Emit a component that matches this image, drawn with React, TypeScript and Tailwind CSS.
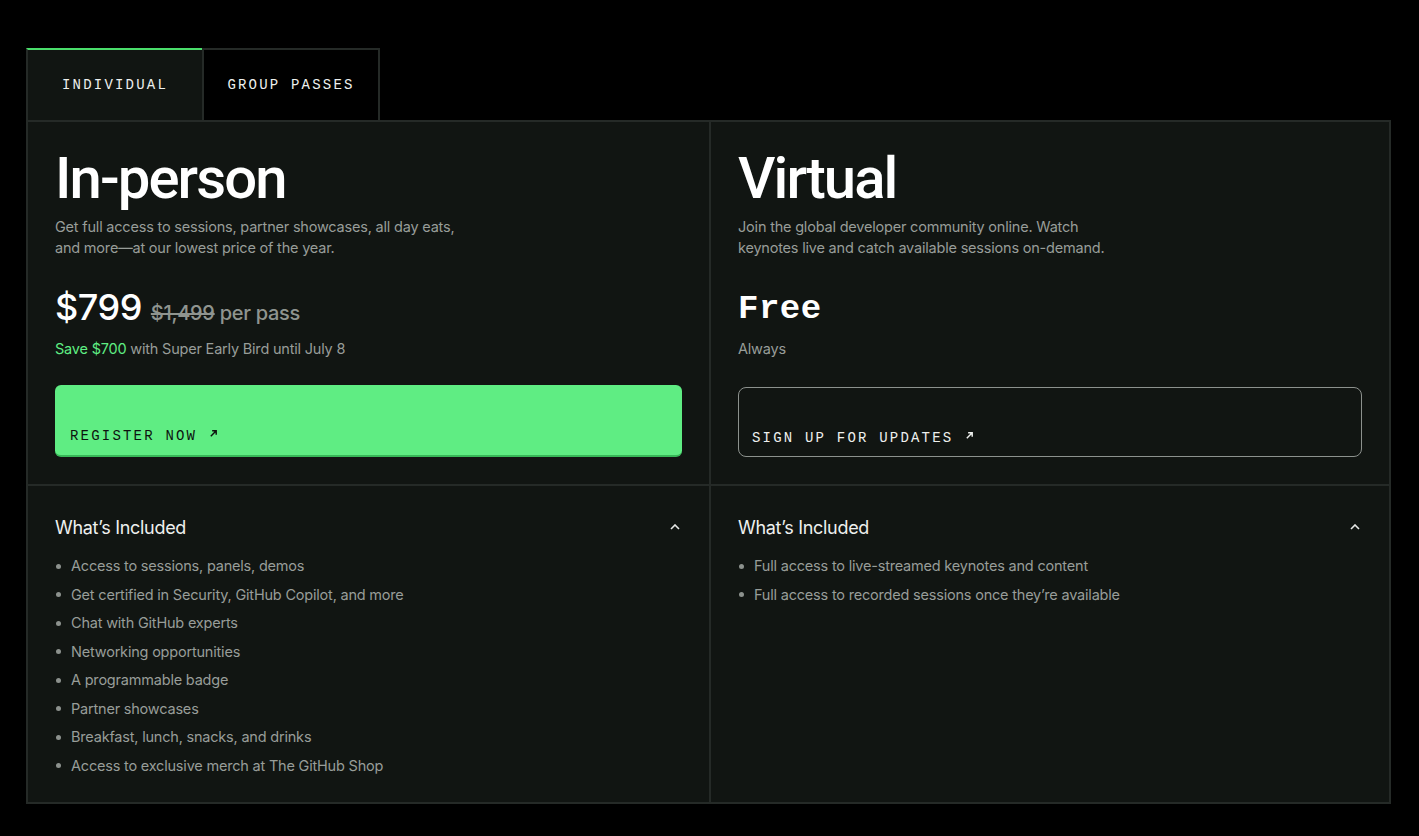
import React from "react";

const inPerson = [
  "Access to sessions, panels, demos",
  "Get certified in Security, GitHub Copilot, and more",
  "Chat with GitHub experts",
  "Networking opportunities",
  "A programmable badge",
  "Partner showcases",
  "Breakfast, lunch, snacks, and drinks",
  "Access to exclusive merch at The GitHub Shop",
];
const virtual = [
  "Full access to live-streamed keynotes and content",
  "Full access to recorded sessions once they’re available",
];

const sans = { fontFamily: "Inter, 'Noto Sans', sans-serif" };
const head = { fontFamily: "Roboto, Inter, sans-serif" };
const mono = { fontFamily: "'Liberation Mono', 'DejaVu Sans Mono', monospace" };

function Arrow() {
  return (
    <svg width="9" height="9" viewBox="0 0 10 10" className="inline-block ml-[12px] -mt-[2px]">
      <path d="M2 8 L8 2 M3.5 2 H8 V6.5" stroke="currentColor" strokeWidth="1.6" fill="none" />
    </svg>
  );
}

function Chevron() {
  return (
    <svg width="10" height="6" viewBox="0 0 10 6">
      <path d="M1 5 L5 1 L9 5" stroke="#e6e8e6" strokeWidth="1.6" fill="none" />
    </svg>
  );
}

function Included({ items }: { items: string[] }) {
  return (
    <div className="px-[27px] pt-[28px] pb-[22px]">
      <div className="flex items-center justify-between">
        <div className="text-[18px] text-[#eef0ee] tracking-[-0.3px]" style={sans}>What’s Included</div>
        <div className="mr-[2px]"><Chevron /></div>
      </div>
      <ul className="mt-[11px] flex flex-col">
        {items.map((t) => (
          <li key={t} className="flex items-center h-[28.5px] text-[14.5px] text-[#989d99] tracking-[-0.2px]" style={sans}>
            <span className="w-[5px] h-[5px] rounded-full bg-[#8c918d] ml-[1px] mr-[10px]" />
            {t}
          </li>
        ))}
      </ul>
    </div>
  );
}

export default function App() {
  return (
    <div className="min-h-[836px] bg-black pt-[48px] pl-[26px] pr-[28px]">
      <div className="flex">
        <div className="w-[176px] h-[72px] bg-[#111512] border-t-2 border-[#4ade6b] border-l-2 border-l-[#252a27] flex items-center justify-center">
          <span className="text-[14px] text-[#eef0ee] tracking-[2.2px]" style={mono}>INDIVIDUAL</span>
        </div>
        <div className="w-[178px] h-[72px] bg-black border-2 border-b-0 border-[#252a27] flex items-center justify-center">
          <span className="text-[14px] text-[#eef0ee] tracking-[2.2px]" style={mono}>GROUP PASSES</span>
        </div>
      </div>
      <div className="grid grid-cols-[683px_1fr] bg-[#111512] border-2 border-[#252a27]">
        <div className="border-r-2 border-[#252a27]">
          <div className="px-[27px] pt-[26px] pb-[27px] border-b-2 border-[#252a27]">
            <h1 className="text-[58px] leading-[60px] font-medium text-white tracking-[-1.9px]" style={head}>In-person</h1>
            <p className="mt-[8px] text-[14.5px] leading-[21px] text-[#989d99] tracking-[-0.2px] max-w-[420px]" style={sans}>
              Get full access to sessions, partner showcases, all day eats, and more—at our lowest price of the year.
            </p>
            <div className="mt-[26px] flex items-baseline gap-[9px]" style={sans}>
              <span className="text-[36px] leading-[46px] font-medium text-white tracking-[-0.5px]">$799</span>
              <span className="text-[20px] text-[#8f948f] font-medium tracking-[-0.3px]">
                <span className="line-through">$1,499</span> per pass
              </span>
            </div>
            <p className="mt-[8px] text-[14.5px] text-[#989d99] tracking-[-0.2px]" style={sans}>
              <span className="text-[#5fed83]">Save $700</span> with Super Early Bird until July 8
            </p>
            <button className="mt-[25px] w-full h-[72px] rounded-[6px] bg-[#5fed83] border-b-2 border-[#37b858] flex items-end px-[15px] pb-[8px]">
              <span className="text-[14px] text-[#0d130f] tracking-[2.2px]" style={mono}>REGISTER NOW</span>
              <span className="text-[#0d130f] mb-[2px]"><Arrow /></span>
            </button>
          </div>
          <Included items={inPerson} />
        </div>
        <div>
          <div className="px-[27px] pt-[26px] pb-[27px] border-b-2 border-[#252a27]">
            <h1 className="text-[58px] leading-[60px] font-medium text-white tracking-[-1.9px]" style={head}>Virtual</h1>
            <p className="mt-[8px] text-[14.5px] leading-[21px] text-[#989d99] tracking-[-0.2px] max-w-[380px]" style={sans}>
              Join the global developer community online. Watch keynotes live and catch available sessions on-demand.
            </p>
            <div className="mt-[28px] h-[46px] flex items-center">
              <span className="text-[34px] font-bold text-white tracking-[0.5px]" style={mono}>Free</span>
            </div>
            <p className="mt-[6px] text-[14.5px] text-[#989d99] tracking-[-0.2px]" style={sans}>Always</p>
            <button className="mt-[27px] w-full h-[70px] rounded-[8px] border border-[#8c918d] flex items-end px-[13px] pb-[7px]">
              <span className="text-[14px] text-[#eef0ee] tracking-[2.2px]" style={mono}>SIGN UP FOR UPDATES</span>
              <span className="text-[#eef0ee] mb-[2px]"><Arrow /></span>
            </button>
          </div>
          <Included items={virtual} />
        </div>
      </div>
    </div>
  );
}
